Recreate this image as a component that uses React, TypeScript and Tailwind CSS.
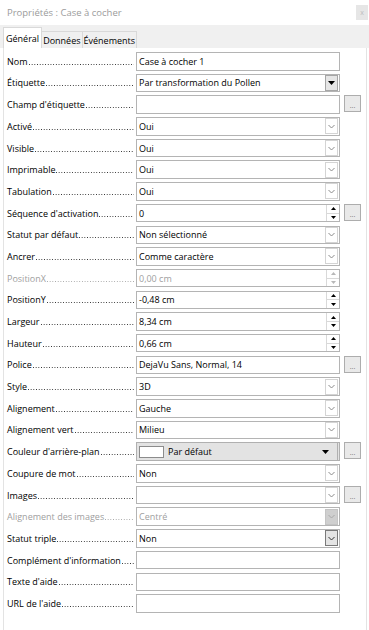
import React from 'react'

type Kind = 'text' | 'combo' | 'list' | 'spin' | 'color' | 'listOff' | 'spinOff' | 'listHot'

type Row = {
    label: string
    value?: string
    kind: Kind
    more?: boolean
    off?: boolean
}

const rows: Row[] = [
    { label: 'Nom', value: 'Case à cocher 1', kind: 'text' },
    { label: 'Étiquette', value: 'Par transformation du Pollen', kind: 'combo' },
    { label: "Champ d'étiquette", value: '', kind: 'text', more: true },
    { label: 'Activé', value: 'Oui', kind: 'list' },
    { label: 'Visible', value: 'Oui', kind: 'list' },
    { label: 'Imprimable', value: 'Oui', kind: 'list' },
    { label: 'Tabulation', value: 'Oui', kind: 'list' },
    { label: "Séquence d'activation", value: '0', kind: 'spin', more: true },
    { label: 'Statut par défaut', value: 'Non sélectionné', kind: 'list' },
    { label: 'Ancrer', value: 'Comme caractère', kind: 'list' },
    { label: 'PositionX', value: '0,00 cm', kind: 'spinOff', off: true },
    { label: 'PositionY', value: '-0,48 cm', kind: 'spin' },
    { label: 'Largeur', value: '8,34 cm', kind: 'spin' },
    { label: 'Hauteur', value: '0,66 cm', kind: 'spin' },
    { label: 'Police', value: 'DejaVu Sans, Normal, 14', kind: 'text', more: true },
    { label: 'Style', value: '3D', kind: 'list' },
    { label: 'Alignement', value: 'Gauche', kind: 'list' },
    { label: 'Alignement vert', value: 'Milieu', kind: 'list' },
    { label: "Couleur d'arrière-plan", value: 'Par défaut', kind: 'color', more: true },
    { label: 'Coupure de mot', value: 'Non', kind: 'list' },
    { label: 'Images', value: '', kind: 'list', more: true },
    { label: 'Alignement des images', value: 'Centré', kind: 'listOff', off: true },
    { label: 'Statut triple', value: 'Non', kind: 'listHot' },
    { label: "Complément d'information", value: '', kind: 'text' },
    { label: "Texte d'aide", value: '', kind: 'text' },
    { label: "URL de l'aide", value: '', kind: 'text' },
]

const Chevron = ({ color }: { color: string }) => (
    <svg width="7" height="5" viewBox="0 0 7 5">
        <path d="M0.5 1 L3.5 4 L6.5 1" fill="none" stroke={color} strokeWidth="1" />
    </svg>
)

const Spin = ({ off }: { off?: boolean }) => {
    const c = off ? '#b8b8b8' : '#000'
    return (
        <div className="flex flex-col h-full w-[13px] ml-auto border-l border-[#d9d9d9]">
            <div className="flex-1 flex items-center justify-center border-b border-[#d9d9d9]">
                <svg width="5" height="3" viewBox="0 0 5 3">
                    <path d="M0 3 L2.5 0 L5 3 Z" fill={c} />
                </svg>
            </div>
            <div className="flex-1 flex items-center justify-center">
                <svg width="5" height="3" viewBox="0 0 5 3">
                    <path d="M0 0 L2.5 3 L5 0 Z" fill={c} />
                </svg>
            </div>
        </div>
    )
}

const Control = ({ row }: { row: Row }) => {
    if (row.kind === 'color') {
        return (
            <div className="flex items-center w-[204px] h-full border border-[#b0b0b0] bg-[#e3e3e3]">
                <div className="ml-[2px] w-[25px] h-[12px] border border-[#8c8c8c] bg-white" />
                <span className="ml-[4px]">{row.value}</span>
                <svg className="ml-auto mr-[8px]" width="7" height="4" viewBox="0 0 7 4">
                    <path d="M0 0 L3.5 4 L7 0 Z" fill="#000" />
                </svg>
                <div className="w-px h-full bg-[#b0b0b0]" />
                <div className="w-px" />
            </div>
        )
    }

    return (
        <div className="flex items-center w-[204px] h-full border border-[#b4b4b4] bg-white">
            <span className={'pl-[2px] whitespace-nowrap ' + (row.off ? 'text-[#a0a0a0]' : 'text-black')}>
                {row.value}
            </span>
            {row.kind === 'combo' && (
                <div className="ml-auto mr-px w-[13px] h-[16px] flex items-center justify-center bg-[#e6e6e6] border border-[#a6a6a6]">
                    <svg width="7" height="4" viewBox="0 0 7 4">
                        <path d="M0 0 L3.5 4 L7 0 Z" fill="#000" />
                    </svg>
                </div>
            )}
            {row.kind === 'list' && (
                <div className="ml-auto mr-px w-[13px] h-[16px] flex items-center justify-center border border-[#d4d4d4]">
                    <Chevron color="#8a8a8a" />
                </div>
            )}
            {row.kind === 'listOff' && (
                <div className="ml-auto mr-px w-[13px] h-[16px] flex items-center justify-center bg-[#cfcfcf] border border-[#c4c4c4]">
                    <Chevron color="#a8a8a8" />
                </div>
            )}
            {row.kind === 'listHot' && (
                <div className="ml-auto mr-px w-[13px] h-[16px] flex items-center justify-center bg-[#e4e4e4] border border-[#7a7a7a]">
                    <Chevron color="#333" />
                </div>
            )}
            {(row.kind === 'spin' || row.kind === 'spinOff') && <Spin off={row.off} />}
        </div>
    )
}

const App: React.FC = () => {
    return (
        <div className="w-[369px] h-[630px] bg-white overflow-hidden text-[9px] leading-[13px] font-['Open_Sans',sans-serif]">
            {/* title bar */}
            <div className="h-[25px] flex items-center justify-between pl-[7px] pr-[1px]">
                <span className="text-[9.5px] text-[#9b9b9b]">Propriétés : Case à cocher</span>
                <div className="w-[12px] h-[15px] bg-[#e6e6e6] flex items-center justify-center text-[7px] text-[#bdbdbd]">
                    x
                </div>
            </div>

            {/* tabs */}
            <div className="h-[23px] bg-[#f0f0f0] flex items-end pl-[3px]">
                <div className="h-[21px] px-[2px] flex items-center bg-white border border-b-0 border-[#d9d9d9] text-black">
                    Général
                </div>
                <div className="h-[17px] px-[1px] flex items-center border-t border-r border-[#d9d9d9] text-black">
                    Données
                </div>
                <div className="h-[17px] px-[1px] flex items-center border-t border-r border-[#d9d9d9] text-black">
                    Événements
                </div>
            </div>

            {/* panel */}
            <div className="ml-[3px] mr-[2px] h-[582px] border-l border-r border-[#e3e3e3] pt-[4px]">
                {rows.map((row) => (
                    <div key={row.label} className="h-[21.7px] flex items-start">
                        <div className="pl-[3px] w-[130px] h-[18.5px] flex items-center whitespace-nowrap">
                            <span className={'shrink-0 ' + (row.off ? 'text-[#a0a0a0]' : 'text-black')}>{row.label}</span>
                            <div
                                className={
                                    'flex-1 h-[13px] bg-repeat-x bg-[length:2.7px_1px] bg-[position:1px_9px] ' +
                                    (row.off
                                        ? 'bg-[linear-gradient(to_right,#a8a8a8_1px,transparent_1px)]'
                                        : 'bg-[linear-gradient(to_right,#333_1px,transparent_1px)]')
                                }
                            />
                        </div>
                        <div className="ml-[2px] h-[18.5px] flex">
                            <Control row={row} />
                        </div>
                        {row.more && (
                            <div className="ml-[4px] w-[17px] h-[17px] border border-[#adadad] bg-[#e9e9e9] flex items-end justify-center pb-[2px] text-[7px] leading-[7px] text-[#707070]">
                                ...
                            </div>
                        )}
                    </div>
                ))}
            </div>
        </div>
    )
}

export default App
